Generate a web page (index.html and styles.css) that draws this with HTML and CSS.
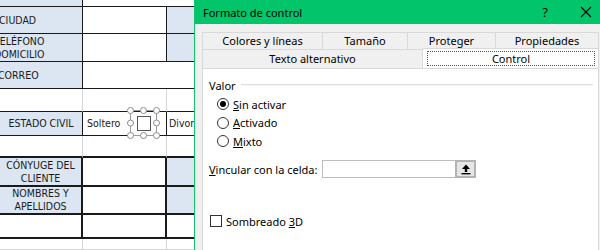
FILE: index.html
```html
<!DOCTYPE html>
<html lang="es">
<head>
    <meta charset="UTF-8">
    <title>Formato de control</title>
    <link rel="stylesheet" href="styles.css">
</head>
<body>
    <div class="screen">
        <!-- hoja de cálculo -->
        <div class="sheet">
            <div class="cell blue"></div>
            <div class="cell span2"></div>

            <div class="cell blue"><span class="clip c1">CIUDAD</span></div>
            <div class="cell"></div>
            <div class="cell blue last"></div>

            <div class="cell blue"><span class="clip c2">TELÉFONO<br>DOMICILIO</span></div>
            <div class="cell"></div>
            <div class="cell blue last"></div>

            <div class="cell blue"><span class="clip c3">CORREO</span></div>
            <div class="cell span2"></div>

            <div class="cell faint"></div>
            <div class="cell faint"></div>
            <div class="cell faint last"></div>

            <div class="cell blue center">ESTADO CIVIL</div>
            <div class="cell pad">Soltero</div>
            <div class="cell pad-s last">Divorc</div>

            <div class="cell faint thick-b"></div>
            <div class="cell faint thick-b"></div>
            <div class="cell faint thick-b last"></div>

            <div class="cell blue center thick">CÓNYUGE DEL<br>CLIENTE</div>
            <div class="cell thick"></div>
            <div class="cell blue thick last"></div>

            <div class="cell blue center thick">NOMBRES Y<br>APELLIDOS</div>
            <div class="cell thick"></div>
            <div class="cell blue thick last"></div>

            <div class="cell thick"></div>
            <div class="cell thick"></div>
            <div class="cell thick last"></div>

            <div class="cell faint nob"></div>
            <div class="cell faint nob"></div>
            <div class="cell faint nob last"></div>

            <!-- casilla seleccionada -->
            <svg class="control" width="33" height="32" viewBox="0 0 33 32">
                <rect x="3.5" y="3.5" width="26" height="25" fill="none" stroke="#9a9a9a"/>
                <rect x="10.5" y="9.5" width="13" height="14" fill="#fff" stroke="#555"/>
                <g fill="#fff" stroke="#8c8c8c">
                    <circle cx="3.5" cy="3.5" r="3"/>
                    <circle cx="16.5" cy="3.5" r="3"/>
                    <circle cx="29.5" cy="3.5" r="3"/>
                    <circle cx="3.5" cy="16" r="3"/>
                    <circle cx="29.5" cy="16" r="3"/>
                    <circle cx="3.5" cy="28.5" r="3"/>
                    <circle cx="16.5" cy="28.5" r="3"/>
                    <circle cx="29.5" cy="28.5" r="3"/>
                </g>
            </svg>
        </div>

        <!-- cuadro de diálogo -->
        <div class="dialog">
            <div class="titlebar">
                <span class="title">Formato de control</span>
                <span class="help">?</span>
                <svg class="close" width="12" height="12" viewBox="0 0 12 12">
                    <path d="M1 1 L11 11 M11 1 L1 11" stroke="#000" stroke-width="1.1"/>
                </svg>
            </div>

            <div class="tabs">
                <div class="tab-row">
                    <div class="tab w1">Colores y líneas</div>
                    <div class="tab w2">Tamaño</div>
                    <div class="tab w3">Proteger</div>
                    <div class="tab w4">Propiedades</div>
                </div>
                <div class="tab-row">
                    <div class="tab w5">Texto alternativo</div>
                    <div class="tab w6 active"><span class="focus">Control</span></div>
                </div>
            </div>

            <div class="panel">
                <div class="group-head">
                    <span>Valor</span>
                    <span class="rule"></span>
                </div>
                <div class="radios">
                    <div class="radio-row"><span class="radio on"></span><span><u>S</u>in activar</span></div>
                    <div class="radio-row"><span class="radio"></span><span><u>A</u>ctivado</span></div>
                    <div class="radio-row"><span class="radio"></span><span><u>M</u>ixto</span></div>
                </div>

                <div class="link-row">
                    <span class="link-label"><u>V</u>incular con la celda:</span>
                    <span class="input"></span>
                    <span class="picker">
                        <svg width="10" height="11" viewBox="0 0 10 11">
                            <path d="M5 0.5 L9 5 L6.2 5 L6.2 8 L3.8 8 L3.8 5 L1 5 Z" fill="#000"/>
                            <rect x="0.5" y="9" width="9" height="1.4" fill="#000"/>
                        </svg>
                    </span>
                </div>

                <div class="check-row">
                    <span class="check"></span>
                    <span>Sombreado <u>3</u>D</span>
                </div>
            </div>
        </div>
    </div>
</body>
</html>
```

FILE: styles.css
```css
* {
    margin: 0;
    padding: 0;
    box-sizing: border-box;
}

body {
    width: 600px;
    height: 250px;
    overflow: hidden;
    background: #fff;
}

.screen {
    display: flex;
    height: 250px;
}

/* hoja de cálculo */
.sheet {
    position: relative;
    flex: none;
    width: 194px;
    height: 250px;
    display: grid;
    grid-template-columns: 83px 84px 27px;
    grid-template-rows: 7px 27px 28px 27px 23px 24px 22px 29px 28px 24px 11px;
    font-family: "DejaVu Sans Condensed", "Liberation Sans", sans-serif;
    font-size: 10.5px;
    line-height: 13px;
    color: #1a1a1a;
    overflow: hidden;
}

.cell {
    border-right: 1px solid #1a1a1a;
    border-bottom: 1px solid #1a1a1a;
    display: flex;
    align-items: center;
    overflow: hidden;
    white-space: nowrap;
}

.blue {
    background: #dce6f2;
}

.span2 {
    grid-column: span 2;
    border-right: none;
}

.last {
    border-right: none;
}

.faint {
    border-right-color: #d6d6d6;
}

.nob {
    border-bottom-color: #d6d6d6;
}

.thick {
    border-right-width: 2px;
    border-bottom-width: 2px;
}

.thick-b {
    border-bottom-width: 2px;
}

.center {
    justify-content: center;
    text-align: center;
}

.pad {
    padding-left: 4px;
}

.pad-s {
    padding-left: 2px;
}

.clip {
    flex: none;
}

.c1 {
    margin-left: -1px;
}

.c2 {
    margin-left: -6px;
}

.c3 {
    margin-left: -2px;
}

.control {
    position: absolute;
    left: 127px;
    top: 107px;
}

/* cuadro de diálogo */
.dialog {
    flex: 1;
    display: flex;
    flex-direction: column;
    border-left: 1px solid #16c46f;
    background: #f0f0f0;
    font-family: "Noto Sans", sans-serif;
    font-size: 11px;
    color: #000;
}

.titlebar {
    height: 24px;
    background: #02c46b;
    display: flex;
    align-items: center;
    padding-left: 8px;
    font-size: 11px;
}

.help {
    margin-left: auto;
    font-size: 13px;
}

.close {
    margin-left: 32px;
    margin-right: 8px;
}

.tabs {
    margin: 8px 1px 0 7px;
}

.tab-row {
    display: flex;
}

.tab {
    height: 17px;
    line-height: 16px;
    text-align: center;
    border-top: 1px solid #d9d9d9;
    border-left: 1px solid #d9d9d9;
}

.tab-row + .tab-row .tab {
    height: 19px;
    line-height: 17px;
}

.w1 { width: 120px; }
.w2 { width: 85px; }
.w3 { width: 88px; }
.w4 { width: 104px; border-right: 1px solid #d9d9d9; }
.w5 { width: 220px; }
.w6 { width: 177px; }

.active {
    background: #fff;
    border-right: 1px solid #d9d9d9;
    margin-top: -1px;
    height: 20px !important;
    padding: 2px 3px 0 4px;
    position: relative;
    z-index: 1;
}

.focus {
    display: block;
    height: 15px;
    line-height: 13px;
    border: 1px dotted #555;
}

.panel {
    flex: 1;
    margin: 0 1px 0 7px;
    background: #fff;
    border: 1px solid #d9d9d9;
    border-bottom: none;
    padding: 8px 0 0 6px;
}

.group-head {
    display: flex;
    align-items: center;
    height: 16px;
}

.rule {
    flex: 1;
    height: 2px;
    margin: 0 5px 0 5px;
    border-top: 1px solid #dcdcdc;
    border-bottom: 1px solid #f6f6f6;
}

.radios {
    margin-top: 2px;
}

.radio-row {
    display: flex;
    align-items: center;
    height: 18.5px;
}

.radio {
    width: 12px;
    height: 12px;
    margin: 0 4px 0 8px;
    border: 1px solid #333;
    border-radius: 50%;
    background: #fff;
    display: flex;
    align-items: center;
    justify-content: center;
}

.radio.on::after {
    content: '';
    width: 6px;
    height: 6px;
    border-radius: 50%;
    background: #000;
}

.link-row {
    display: flex;
    align-items: center;
    margin-top: 9.5px;
    height: 18px;
}

.link-label {
    width: 113px;
}

.input {
    width: 133px;
    height: 18px;
    border: 1px solid #bdbdbd;
    border-right: none;
}

.picker {
    width: 21px;
    height: 18px;
    background: #e6e6e6;
    border: 2px solid #b3b3b3;
    display: flex;
    align-items: center;
    justify-content: center;
}

.check-row {
    display: flex;
    align-items: center;
    margin-top: 37px;
    height: 12px;
}

.check {
    width: 12px;
    height: 12px;
    margin: 0 4px 0 1px;
    border: 1px solid #333;
    background: #fff;
}
```
